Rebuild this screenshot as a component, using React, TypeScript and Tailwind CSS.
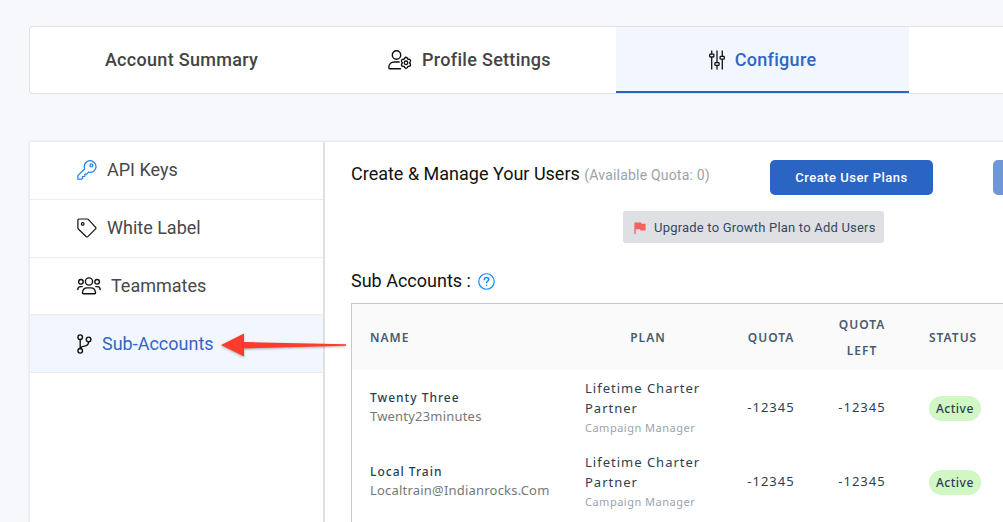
import type { ReactNode } from "react";

const stroke = {
  fill: "none",
  stroke: "currentColor",
  strokeLinecap: "round" as const,
  strokeLinejoin: "round" as const,
};

function UserGearIcon() {
  return (
    <svg width="24" height="20" viewBox="0 0 24 20" strokeWidth="1.4" {...stroke} aria-hidden="true">
      <circle cx="8.5" cy="5" r="4.2" />
      <path d="M12.5 18.8H2c-.8 0-1.2-.4-1.2-1.2 0-3.400 2.400-5.600 5.400-5.600h5" />
      <path
        strokeWidth="1.300"
        d="M16.600 8.100l1.400-1 1.400 1 .5 1.200 1.300-.1 1.300.8-.1 1.600-.9 1.200.9 1.200.1 1.600-1.300.8-1.300-.1-.5 1.200-1.400 1-1.400-1-.5-1.200-1.300.1-1.300-.8.1-1.600.9-1.200-.9-1.200-.1-1.600 1.300-.8 1.300.1z"
      />
      <circle cx="18" cy="12.800" r="1.800" strokeWidth="1.300" />
    </svg>
  );
}

function SlidersIcon() {
  return (
    <svg width="16" height="20" viewBox="0 0 16 20" strokeWidth="1.300" {...stroke} strokeLinecap="butt" aria-hidden="true">
      <path d="M2.700 .5v3.700M2.700 7.200v12.300M8 .5v12M8 15.500v4M13.300 .5v5.700M13.300 9.200v10.300" />
      <rect x=".7" y="4.200" width="4.200" height="2.800" rx=".7" />
      <rect x="5.900" y="12.600" width="4.200" height="2.800" rx=".7" />
      <rect x="11.100" y="6.400" width="4.200" height="2.800" rx=".7" />
    </svg>
  );
}

function KeyIcon() {
  return (
    <svg width="20" height="20" viewBox="0 0 20 20" strokeWidth="1.200" {...stroke} className="text-[#1a83f0]" aria-hidden="true">
      <path d="M.9 15.600L7.600 9C6.700 5.500 8 2.900 10.200 1.600c2.400-1.400 5.200-.9 7 .9 1.900 1.900 2.300 4.700.9 7-1.300 2.200-3.900 3.300-6.600 2.700l-1.800 1.900H7.900v1.800l-.5.600H5.600v1.900l-.8.800H.9z" />
      <circle cx="14.400" cy="5.400" r="1.500" />
    </svg>
  );
}

function TagIcon() {
  return (
    <svg width="20" height="20" viewBox="0 0 20 20" strokeWidth="1.200" {...stroke} aria-hidden="true">
      <path d="M2 1h8.200c.5 0 .8.100 1.100.4l7.300 8c.4.500.4 1 0 1.500l-7.800 7.800c-.5.400-1 .4-1.500 0L1.300 11c-.2-.3-.4-.6-.4-1V2c0-.6.500-1 1.100-1z" />
      <circle cx="5.700" cy="5.900" r="1.300" />
    </svg>
  );
}

function TeamIcon() {
  return (
    <svg width="24" height="18" viewBox="0 0 24 18" strokeWidth="1.400" {...stroke} aria-hidden="true">
      <circle cx="12" cy="4.500" r="3.600" />
      <circle cx="3.900" cy="4.800" r="2.300" />
      <circle cx="20.100" cy="4.800" r="2.300" />
      <path d="M6.400 16.700c-.7 0-1-.5-.9-1.200.4-3 2-4.600 4.400-4.600h4.200c2.400 0 4 1.600 4.400 4.600.1.700-.2 1.200-.9 1.200z" />
      <path d="M.8 12.500c.1-1.800 1.200-2.900 2.800-2.900h1.600M23.200 12.500c-.1-1.800-1.200-2.900-2.800-2.900h-1.600" />
    </svg>
  );
}

function BranchIcon() {
  return (
    <svg width="15" height="20" viewBox="0 0 15 20" strokeWidth="1.400" {...stroke} aria-hidden="true">
      <circle cx="3.200" cy="3.200" r="2.300" />
      <circle cx="11.600" cy="5.400" r="2.300" />
      <circle cx="3.200" cy="16.800" r="2.300" />
      <path d="M3.200 5.500v9M11.600 7.700c0 2.800-1.400 4-4.200 4.400-2.400.3-3.900 1-4.200 2.400" />
    </svg>
  );
}

function HelpIcon() {
  return (
    <svg width="17" height="17" viewBox="0 0 18 18" strokeWidth="1.300" {...stroke} className="text-[#1a8cff]" aria-hidden="true">
      <circle cx="9" cy="9" r="8.200" />
      <path strokeWidth="1.600" d="M6.700 7.100c0-1.500 1-2.300 2.400-2.300s2.300.8 2.300 2c0 1.700-2.300 1.700-2.300 3.500M9.100 12.900v.2" />
    </svg>
  );
}

function FlagIcon() {
  return (
    <svg width="12" height="12" viewBox="0 0 12 12" aria-hidden="true">
      <path fill="#f4615f" d="M.4.500h6.700l.4 1.200h4.100v6.800H6.400L6 7.200H1.700V12H.4z" />
    </svg>
  );
}

function Tab({ label, icon, active }: { label: string; icon?: ReactNode; active?: boolean }) {
  return (
    <a
      href="#"
      aria-current={active ? "page" : undefined}
      className={`flex w-[293px] shrink-0 items-center justify-center gap-2.5 border-b-2 pt-0.5 text-lg font-medium tracking-[0.3px] ${
        active ? "border-[#2a65c4] bg-[#f2f6ff] text-[#2f66c5]" : "border-transparent text-[#444]"
      }`}
    >
      <span className="text-[#111]">{icon}</span>
      {label}
    </a>
  );
}

function SideLink({ label, icon, active }: { label: string; icon: ReactNode; active?: boolean }) {
  return (
    <a
      href="#"
      aria-current={active ? "page" : undefined}
      className={`flex items-center gap-2.5 border-b border-[#f3e8ec] pl-[47px] text-lg ${
        active ? "bg-[#f2f6ff] text-[#3365c4]" : "text-[#484848]"
      }`}
    >
      <span className="text-[#111]">{icon}</span>
      {label}
    </a>
  );
}

const accounts = [
  { name: "Twenty Three", login: "Twenty23minutes" },
  { name: "Local Train", login: "Localtrain@Indianrocks.Com" },
];

export default function App() {
  return (
    <div className="flex min-h-screen flex-col overflow-hidden bg-[#f6f8fc] pt-[26px] pl-[29px] font-['Roboto',sans-serif]">
      <nav aria-label="Account" className="flex h-[68px] shrink-0 overflow-hidden rounded-l border border-r-0 border-[#e2e2e4] bg-white">
        <Tab label="Account Summary" />
        <Tab label="Profile Settings" icon={<UserGearIcon />} />
        <Tab label="Configure" icon={<SlidersIcon />} active />
      </nav>

      <div className="mt-12 ml-px flex grow bg-white shadow-[0_0_2px_1px_#e4e4e6]">
        <aside className="relative w-[295px] shrink-0 border-r-2 border-[#e0e0e0]">
          <nav aria-label="Configure" className="grid h-[231px] auto-rows-fr">
            <SideLink label="API Keys" icon={<KeyIcon />} />
            <SideLink label="White Label" icon={<TagIcon />} />
            <SideLink label="Teammates" icon={<TeamIcon />} />
            <SideLink label="Sub-Accounts" icon={<BranchIcon />} active />
          </nav>
          <svg
            width="128"
            height="28"
            viewBox="0 0 128 28"
            className="absolute top-[189px] left-[190px] drop-shadow-[0_1px_1px_rgba(0,0,0,0.3)]"
            aria-hidden="true"
          >
            <path fill="#ff3b2b" d="M1 14L24 2.500v8.500l102 2.200v1.600L24 17.500V25.500z" />
          </svg>
        </aside>

        <main className="flex min-w-0 flex-1 flex-col pt-[18px] pl-[26px]">
          <div className="flex h-[35px] items-start overflow-hidden">
            <h1 className="w-[419px] shrink-0 text-lg text-[#111]">
              Create &amp; Manage Your Users{" "}
              <small className="text-sm tracking-[0.2px] text-[#9aa3ab]">(Available Quota: 0)</small>
            </h1>
            <button type="button" className="h-[35px] w-[163px] shrink-0 rounded-[5px] bg-[#2a65c4] text-[13px] font-medium tracking-[0.5px] text-white">
              Create User Plans
            </button>
            <button type="button" aria-label="Add User" disabled className="ml-[60px] h-[35px] w-[120px] shrink-0 rounded-[5px] bg-[#6f97d8]" />
          </div>

          <button type="button" className="mt-4 ml-[272px] flex h-8 w-[261px] items-center gap-2 rounded-[3px] bg-[#dfe0e4] pt-0.5 pl-[11px] text-[13px] tracking-[0.2px] whitespace-nowrap text-[#34495e]">
            <FlagIcon />
            Upgrade to Growth Plan to Add Users
          </button>

          <h2 className="mt-6 flex items-center gap-[7px] text-lg text-[#111]">
            Sub Accounts :
            <HelpIcon />
          </h2>

          <div className="mt-2 grow border-t border-l border-[#c9c9c9]">
            <table className="w-full table-fixed border-collapse font-['Noto_Sans',sans-serif] text-[13px] tracking-[1px] text-[#2b3e55]">
              <colgroup>
                <col className="w-[215px]" />
                <col className="w-[162px]" />
                <col className="w-[84px]" />
                <col className="w-[98px]" />
                <col />
              </colgroup>
              <thead className="bg-[#fafafa] text-xs leading-[26px] text-[#485a70]">
                <tr className="h-[66px]">
                  <th className="pt-0.5 pl-[18px] text-left font-semibold">NAME</th>
                  <th className="pt-0.5 font-semibold">PLAN</th>
                  <th className="pt-0.5 font-semibold">QUOTA</th>
                  <th className="px-4 pt-0.5 font-semibold">QUOTA LEFT</th>
                  <th className="pt-0.5 pl-[18px] text-left font-semibold">STATUS</th>
                </tr>
              </thead>
              <tbody>
                {accounts.map((a) => (
                  <tr key={a.name} className="h-[74px]">
                    <td className="pl-[18px]">
                      <div className="text-xs leading-[19px] font-medium">{a.name}</div>
                      <div className="leading-[19px] tracking-[0.2px] text-[#777]">{a.login}</div>
                    </td>
                    <td className="pt-0.5 pl-[18px] leading-5">
                      <div>Lifetime Charter Partner</div>
                      <div className="text-[11px] tracking-[0.5px] text-[#9aa3ad]">Campaign Manager</div>
                    </td>
                    <td className="pt-0.5 text-center">-12345</td>
                    <td className="pt-0.5 text-center">-12345</td>
                    <td className="pt-0.5 pl-[18px]">
                      <span className="inline-block rounded-full bg-[#d1f7c4] px-[7px] text-xs leading-[25px] font-medium tracking-[0.5px]">Active</span>
                    </td>
                  </tr>
                ))}
              </tbody>
            </table>
          </div>
        </main>
      </div>
    </div>
  );
}
